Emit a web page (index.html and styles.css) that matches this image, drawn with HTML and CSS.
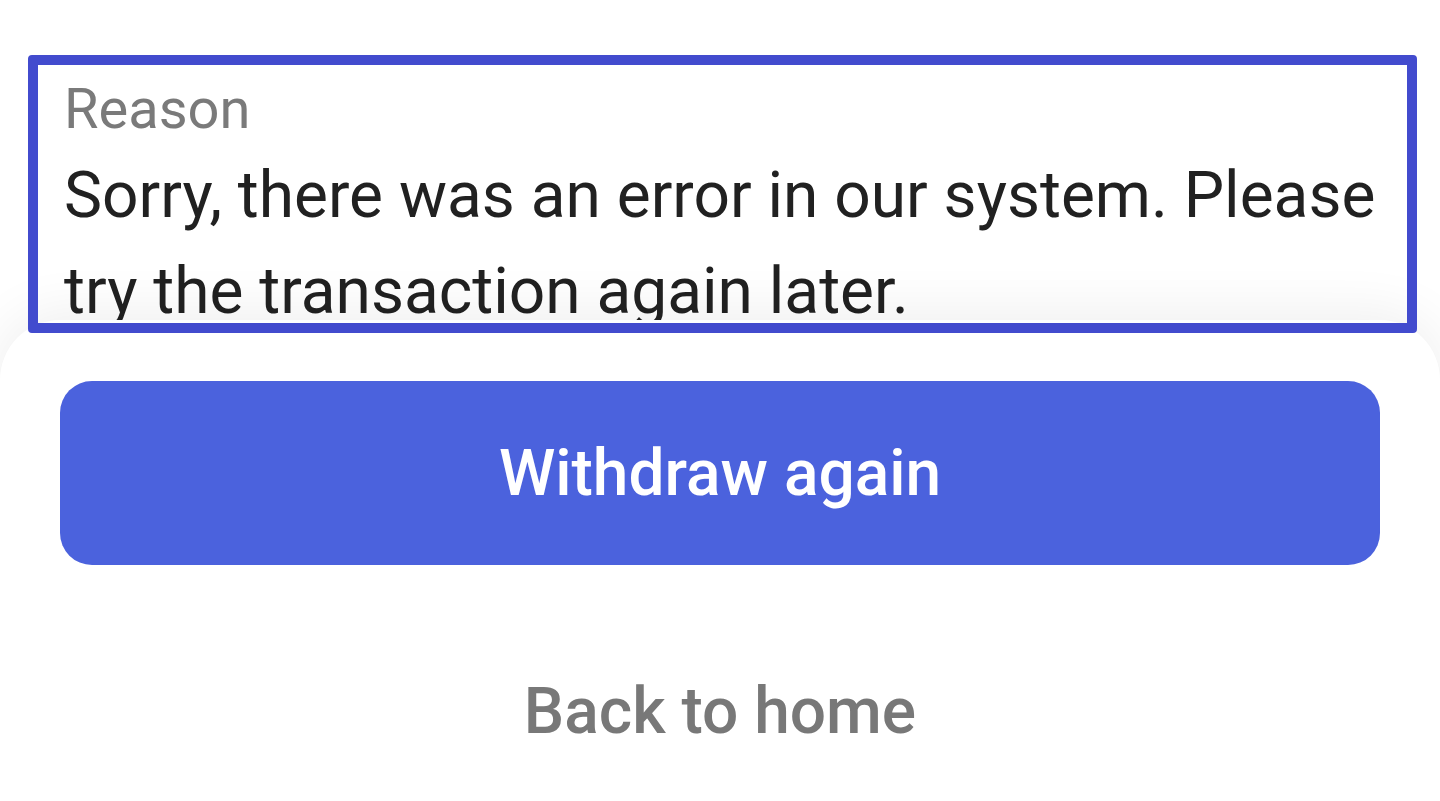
FILE: index.html
```html
<!DOCTYPE html>
<html lang="en">
<head>
    <meta charset="UTF-8">
    <meta name="viewport" content="width=device-width, initial-scale=1.0">
    <title>Withdrawal failed</title>
    <link rel="stylesheet" href="styles.css">
</head>
<body>
    <div class="page">
        <!-- Failure reason -->
        <div class="reason">
            <div class="reason-label">Reason</div>
            <div class="reason-text">Sorry, there was an error in our system. Please try the transaction again later.</div>
        </div>

        <!-- Bottom sheet with actions -->
        <div class="sheet">
            <button type="button" class="btn btn-primary">Withdraw again</button>
            <button type="button" class="btn btn-text">Back to home</button>
        </div>

        <div class="highlight"></div>
    </div>
</body>
</html>
```

FILE: styles.css
```css
/* Base */
body {
    margin: 0;
    background: #ffffff;
    font-family: Roboto, "Noto Sans", Arial, sans-serif;
    overflow: hidden;
}

.page {
    position: relative;
    height: 801px;
    display: flex;
    flex-direction: column;
}

/* Reason block */
.reason {
    padding: 70px 64px 0 64px;
}

.reason-label {
    font-size: 56px;
    line-height: 78px;
    color: #7a7a7a;
}

.reason-text {
    font-size: 64px;
    line-height: 96px;
    color: #212121;
}

/* Bottom sheet */
.sheet {
    position: relative;
    z-index: 1;
    flex: 1;
    margin-top: -20px;
    background: #ffffff;
    border-radius: 60px 60px 0 0;
    box-shadow: 0 -6px 56px rgba(0, 0, 0, 0.07);
    padding: 61px 60px 0;
    display: flex;
    flex-direction: column;
    gap: 54px;
}

.btn {
    height: 184px;
    width: 100%;
    border: none;
    border-radius: 32px;
    font-family: inherit;
    font-size: 64px;
    font-weight: 500;
    cursor: pointer;
    padding: 0;
}

.btn-primary {
    background: #4b62dd;
    color: #ffffff;
}

.btn-text {
    background: transparent;
    color: #787878;
}

/* Selection outline drawn over the reason block */
.highlight {
    position: absolute;
    z-index: 2;
    top: 55px;
    left: 28px;
    width: 1389px;
    height: 278px;
    box-sizing: border-box;
    border: 10px solid #424bce;
    border-radius: 4px;
}
```
